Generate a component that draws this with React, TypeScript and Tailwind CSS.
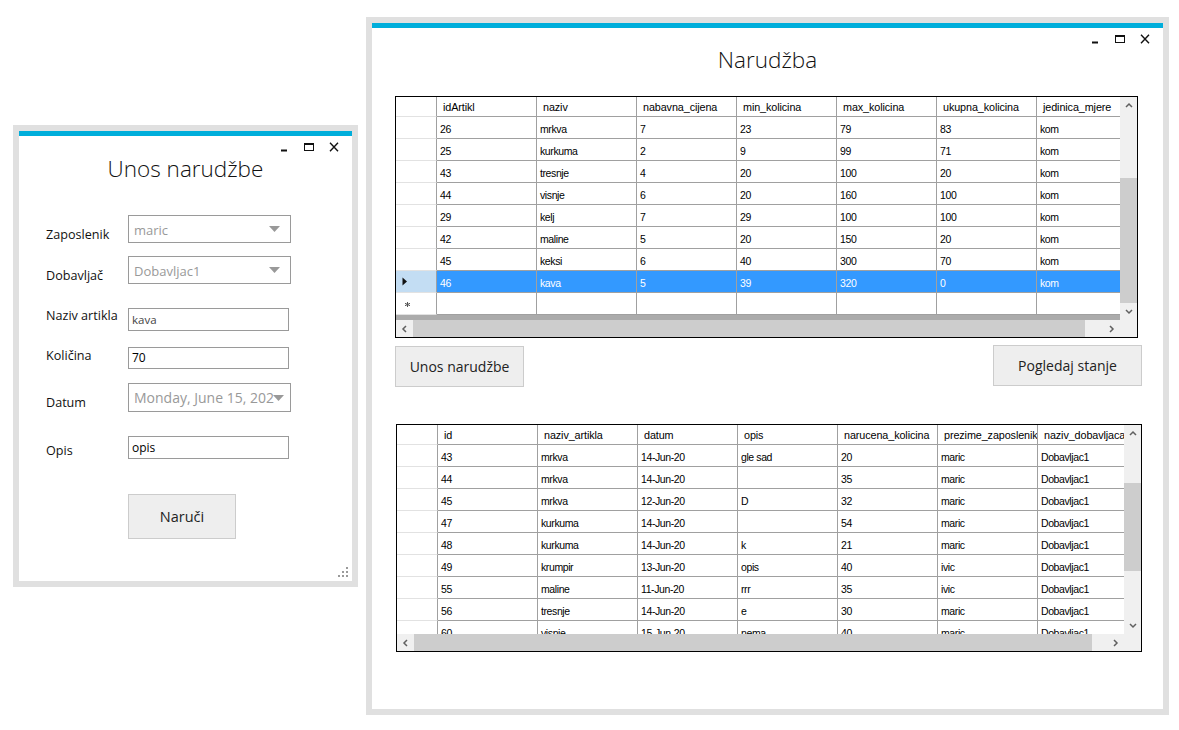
import React from 'react';

const UI = "font-['Open_Sans',sans-serif]";
const CELL = "font-['Liberation_Sans',Arial,sans-serif]";
const HEAD = "font-['Liberation_Sans',Arial,sans-serif]";

type Col = { name: string };

const TOP_COLS: Col[] = [
  { name: 'idArtikl' },
  { name: 'naziv' },
  { name: 'nabavna_cijena' },
  { name: 'min_kolicina' },
  { name: 'max_kolicina' },
  { name: 'ukupna_kolicina' },
  { name: 'jedinica_mjere' },
];

const TOP_ROWS = [
  ['26', 'mrkva', '7', '23', '79', '83', 'kom'],
  ['25', 'kurkuma', '2', '9', '99', '71', 'kom'],
  ['43', 'tresnje', '4', '20', '100', '20', 'kom'],
  ['44', 'visnje', '6', '20', '160', '100', 'kom'],
  ['29', 'kelj', '7', '29', '100', '100', 'kom'],
  ['42', 'maline', '5', '20', '150', '20', 'kom'],
  ['45', 'keksi', '6', '40', '300', '70', 'kom'],
  ['46', 'kava', '5', '39', '320', '0', 'kom'],
];

const BOTTOM_COLS: Col[] = [
  { name: 'id' },
  { name: 'naziv_artikla' },
  { name: 'datum' },
  { name: 'opis' },
  { name: 'narucena_kolicina' },
  { name: 'prezime_zaposlenik' },
  { name: 'naziv_dobavljaca' },
];

const BOTTOM_ROWS = [
  ['43', 'mrkva', '14-Jun-20', 'gle sad', '20', 'maric', 'Dobavljac1'],
  ['44', 'mrkva', '14-Jun-20', '', '35', 'maric', 'Dobavljac1'],
  ['45', 'mrkva', '12-Jun-20', 'D', '32', 'maric', 'Dobavljac1'],
  ['47', 'kurkuma', '14-Jun-20', '', '54', 'maric', 'Dobavljac1'],
  ['48', 'kurkuma', '14-Jun-20', 'k', '21', 'maric', 'Dobavljac1'],
  ['49', 'krumpir', '13-Jun-20', 'opis', '40', 'ivic', 'Dobavljac1'],
  ['55', 'maline', '11-Jun-20', 'rrr', '35', 'ivic', 'Dobavljac1'],
  ['56', 'tresnje', '14-Jun-20', 'e', '30', 'maric', 'Dobavljac1'],
  ['60', 'visnje', '15-Jun-20', 'nema', '40', 'maric', 'Dobavljac1'],
];

function WindowControls() {
  return (
    <div className="mt-[3px] flex h-[16px] justify-end pr-[6px]">
      <div className="flex w-[25px] items-center justify-center">
        <svg width="8" height="16" viewBox="0 0 8 16">
          <rect x="1" y="10.5" width="6" height="2" fill="#111" />
        </svg>
      </div>
      <div className="flex w-[25px] items-center justify-center">
        <svg width="10" height="16" viewBox="0 0 10 16">
          <rect x="0.5" y="4.5" width="9" height="7" fill="none" stroke="#111" strokeWidth="1" />
          <rect x="0.5" y="4.5" width="9" height="1.5" fill="#111" />
        </svg>
      </div>
      <div className="flex w-[25px] items-center justify-center">
        <svg width="10" height="16" viewBox="0 0 10 16">
          <path d="M1 3.8 L9 12.2 M9 3.8 L1 12.2" stroke="#111" strokeWidth="1.4" />
        </svg>
      </div>
    </div>
  );
}

function Chevron({ dir }: { dir: 'up' | 'down' | 'left' | 'right' }) {
  const d = {
    up: 'M1 5 L4 2 L7 5',
    down: 'M1 2 L4 5 L7 2',
    left: 'M5 1 L2 4 L5 7',
    right: 'M2 1 L5 4 L2 7',
  }[dir];
  return (
    <svg width="8" height="8" viewBox="0 0 8 8">
      <path d={d} fill="none" stroke="#606060" strokeWidth="1.5" />
    </svg>
  );
}

function DropArrow() {
  return (
    <svg width="11" height="6" viewBox="0 0 11 6" className="shrink-0">
      <path d="M0 0 L11 0 L5.5 6 Z" fill="#999" />
    </svg>
  );
}

function DataGrid({
  cols,
  rows,
  selected,
  newRow,
  boxClass,
  bodyClass,
  thumbV,
  thumbH,
}: {
  cols: Col[];
  rows: string[][];
  selected?: number;
  newRow?: boolean;
  boxClass: string;
  bodyClass: string;
  thumbV: string;
  thumbH: string;
}) {
  return (
    <div className={`flex flex-col border border-black bg-white ${boxClass}`}>
      <div className={`flex ${bodyClass}`}>
        <div className="flex-1 overflow-hidden bg-[#ababab]">
          {/* header */}
          <div className={`flex h-[20px] bg-white text-[10.8px] text-black ${HEAD}`}>
            <div className="w-[41px] shrink-0 border-r border-b border-r-[#a0a0a0] border-b-[#e2e2e2]" />
            {cols.map((c) => (
              <div
                key={c.name}
                className="flex w-[100px] shrink-0 items-center overflow-hidden whitespace-nowrap border-r border-b border-[#a0a0a0] pl-[6px] pt-[2px] tracking-[-0.1px]"
              >
                {c.name}
              </div>
            ))}
          </div>
          {rows.map((r, i) => {
            const sel = i === selected;
            return (
              <div key={i} className={`flex h-[22px] text-[10.5px] tracking-[-0.4px] ${CELL}`}>
                <div
                  className={`flex w-[41px] shrink-0 items-center border-r border-b border-r-[#a0a0a0] border-b-[#e2e2e2] pl-[6px] ${
                    sel ? 'bg-[#c3ddf3]' : 'bg-white'
                  }`}
                >
                  {sel && (
                    <svg width="6" height="9" viewBox="0 0 6 9">
                      <path d="M0.5 0.5 L5 4.5 L0.5 8.5 Z" fill="#111" />
                    </svg>
                  )}
                </div>
                {r.map((v, j) => (
                  <div
                    key={j}
                    className={`flex w-[100px] shrink-0 items-center overflow-hidden whitespace-nowrap border-r border-b border-[#a0a0a0] pl-[3px] pt-[5px] ${
                      sel ? 'bg-[#3399ff] text-white' : 'bg-white text-black'
                    }`}
                  >
                    {v}
                  </div>
                ))}
              </div>
            );
          })}
          {newRow && (
            <div className="flex h-[22px]">
              <div className="flex w-[41px] shrink-0 items-center border-r border-b border-r-[#a0a0a0] border-b-[#e2e2e2] bg-white pl-[9px] pt-[2px]">
                <svg width="5" height="5" viewBox="0 0 5 5">
                  <path d="M2.5 0 V5 M0 1.3 L5 3.7 M0 3.7 L5 1.3" stroke="#555" strokeWidth="1" />
                </svg>
              </div>
              {cols.map((c) => (
                <div key={c.name} className="w-[100px] shrink-0 border-r border-b border-[#a0a0a0] bg-white" />
              ))}
            </div>
          )}
        </div>
        {/* vertical scrollbar */}
        <div className="flex w-[17px] shrink-0 flex-col bg-[#f0f0f0]">
          <div className="flex h-[17px] items-center justify-center">
            <Chevron dir="up" />
          </div>
          <div className="flex-1">
            <div className={`bg-[#cdcdcd] ${thumbV}`} />
          </div>
          <div className="flex h-[17px] items-center justify-center">
            <Chevron dir="down" />
          </div>
        </div>
      </div>
      {/* horizontal scrollbar */}
      <div className="flex h-[17px] bg-[#f0f0f0]">
        <div className="flex w-[17px] items-center justify-center">
          <Chevron dir="left" />
        </div>
        <div className="flex-1">
          <div className={`h-full bg-[#cdcdcd] ${thumbH}`} />
        </div>
        <div className="flex w-[17px] items-center justify-center">
          <Chevron dir="right" />
        </div>
        <div className="w-[17px] bg-[#f0f0f0]" />
      </div>
    </div>
  );
}

function Label({ text, pad }: { text: string; pad: string }) {
  return (
    <div className={`w-[82px] shrink-0 whitespace-nowrap text-[12.6px] leading-[20px] text-[#111] ${pad}`}>{text}</div>
  );
}

function UnosWindow() {
  return (
    <div className="mt-[125px] w-[345px] shrink-0 border-[6px] border-[#e0e0e0] bg-white">
      <div className={`flex h-[450px] flex-col ${UI}`}>
        <div className="h-[5px] bg-[#00aedb]" />
        <WindowControls />
        <div className="-mt-[2px] text-center text-[22.5px] font-light leading-[32px] text-[#111]">Unos narudžbe</div>

        <div className="mt-[30px] flex flex-col pl-[27px]">
          <div className="flex h-[28px]">
            <Label text="Zaposlenik" pad="pt-[10px]" />
            <div className="flex h-[28px] w-[163px] items-center justify-between border border-[#9a9a9a] pl-[5px] pr-[10px] pt-[3px] text-[13px] text-[#999]">
              <span>maric</span>
              <span className="-mt-[3px]">
                <DropArrow />
              </span>
            </div>
          </div>
          <div className="mt-[13px] flex h-[28px]">
            <Label text="Dobavljač" pad="pt-[10px]" />
            <div className="flex h-[28px] w-[163px] items-center justify-between border border-[#9a9a9a] pl-[5px] pr-[10px] pt-[3px] text-[13px] text-[#999]">
              <span>Dobavljac1</span>
              <span className="-mt-[3px]">
                <DropArrow />
              </span>
            </div>
          </div>
          <div className="mt-[24px] flex h-[23px]">
            <Label text="Naziv artikla" pad="-mt-[2px]" />
            <div className="flex h-[23px] w-[161px] items-center border border-[#9a9a9a] pl-[3px] pt-[1px] text-[11.5px] text-[#444]">
              kava
            </div>
          </div>
          <div className="mt-[16px] flex h-[21px]">
            <Label text="Količina" pad="-mt-[1px]" />
            <div className="flex h-[22px] w-[161px] items-center border border-[#9a9a9a] pl-[3px] text-[12px] font-medium text-black">
              70
            </div>
          </div>
          <div className="mt-[15px] flex h-[29px]">
            <Label text="Datum" pad="pt-[10px]" />
            <div className="flex h-[29px] w-[163px] items-center overflow-hidden whitespace-nowrap border border-[#9a9a9a] pl-[5px] text-[14px] text-[#999]">
              <span className="w-[140px] shrink-0 overflow-hidden">Monday, June 15, 2020</span>
              <span className="-ml-[1px]">
                <DropArrow />
              </span>
            </div>
          </div>
          <div className="mt-[24px] flex h-[22px]">
            <Label text="Opis" pad="pt-[5px]" />
            <div className="flex h-[23px] w-[161px] items-center border border-[#9a9a9a] pl-[3px] text-[12px] font-medium text-black">
              opis
            </div>
          </div>
          <div className="mt-[36px] pl-[82px]">
            <div className="flex h-[45px] w-[108px] items-center justify-center border border-[#cccccc] bg-[#eeeeee] text-[14.5px] text-[#222]">
              Naruči
            </div>
          </div>
        </div>

        <div className="mt-auto flex justify-end pb-[4px] pr-[4px]">
          <svg width="10" height="10" viewBox="0 0 10 10" fill="#9a9a9a">
            <rect x="8" y="0" width="2" height="2" />
            <rect x="4" y="4" width="2" height="2" />
            <rect x="8" y="4" width="2" height="2" />
            <rect x="0" y="8" width="2" height="2" />
            <rect x="4" y="8" width="2" height="2" />
            <rect x="8" y="8" width="2" height="2" />
          </svg>
        </div>
      </div>
    </div>
  );
}

function NarudzbaWindow() {
  return (
    <div className="ml-[8px] mt-[17px] w-[803px] shrink-0 border-[6px] border-[#e0e0e0] bg-white">
      <div className={`flex h-[686px] flex-col ${UI}`}>
        <div className="h-[5px] bg-[#00aedb]" />
        <WindowControls />
        <div className="-mt-[3px] text-center text-[22.5px] font-light leading-[32px] text-[#111]">Narudžba</div>

        <div className="ml-[23px] mt-[20px]">
          <DataGrid
            cols={TOP_COLS}
            rows={TOP_ROWS}
            selected={7}
            newRow
            boxClass="w-[743px] h-[242px]"
            bodyClass="h-[223px]"
            thumbV="mt-[64px] h-[125px]"
            thumbH="w-[672px]"
          />
        </div>

        <div className="ml-[23px] mt-[8px] flex w-[747px] items-start justify-between text-[14px] text-[#222]">
          <div className="flex h-[41px] w-[129px] items-center justify-center border border-[#cccccc] bg-[#eeeeee]">
            Unos narudžbe
          </div>
          <div className="-mt-[1px] flex h-[41px] w-[149px] items-center justify-center border border-[#cccccc] bg-[#eeeeee]">
            Pogledaj stanje
          </div>
        </div>

        <div className="ml-[24px] mt-[37px]">
          <DataGrid
            cols={BOTTOM_COLS}
            rows={BOTTOM_ROWS}
            boxClass="w-[746px] h-[228px]"
            bodyClass="h-[209px]"
            thumbV="mt-[41px] h-[88px]"
            thumbH="w-[678px]"
          />
        </div>
      </div>
    </div>
  );
}

export default function App() {
  return (
    <div className="flex h-[730px] w-[1179px] items-start overflow-hidden bg-white pl-[13px]">
      <UnosWindow />
      <NarudzbaWindow />
    </div>
  );
}
